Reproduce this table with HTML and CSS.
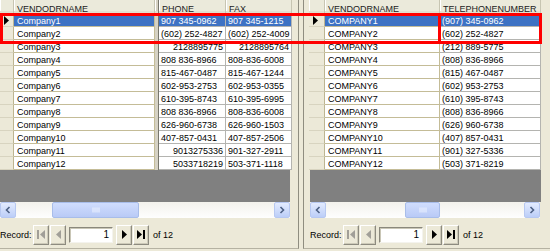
FILE: index.html
```html
<!DOCTYPE html>
<html>
<head>
<meta charset="utf-8">
<link rel="stylesheet" href="styles.css">
</head>
<body>
<div class="screen">
  <section class="panel panel-left">
    <div class="grid grid-left">
      <div class="row hdr"><div class="h"></div><div class="h">VENDODRNAME</div><div class="h split"></div><div class="h">PHONE</div><div class="h">FAX</div></div>
      <div class="row sel"><div class="rh"><svg width="6" height="9" viewBox="0 0 6 9"><path d="M0 0L5 4.5L0 9Z" fill="#000"/></svg></div><div class="c">Company1</div><div class="split"></div><div class="c p">907 345-0962</div><div class="c p">907 345-1215</div></div>
      <div class="row"><div class="rh"></div><div class="c">Company2</div><div class="split"></div><div class="c p">(602) 252-4827</div><div class="c p">(602) 252-4009</div></div>
      <div class="row"><div class="rh"></div><div class="c">Company3</div><div class="split"></div><div class="c p num">2128895775</div><div class="c p num">2128895764</div></div>
      <div class="row"><div class="rh"></div><div class="c">Company4</div><div class="split"></div><div class="c p">808 836-8966</div><div class="c p">808-836-6008</div></div>
      <div class="row"><div class="rh"></div><div class="c">Company5</div><div class="split"></div><div class="c p">815-467-0487</div><div class="c p">815-467-1244</div></div>
      <div class="row"><div class="rh"></div><div class="c">Company6</div><div class="split"></div><div class="c p">602-953-2753</div><div class="c p">602-953-0355</div></div>
      <div class="row"><div class="rh"></div><div class="c">Company7</div><div class="split"></div><div class="c p">610-395-8743</div><div class="c p">610-395-6995</div></div>
      <div class="row"><div class="rh"></div><div class="c">Company8</div><div class="split"></div><div class="c p">808 836-8966</div><div class="c p">808-836-6008</div></div>
      <div class="row"><div class="rh"></div><div class="c">Company9</div><div class="split"></div><div class="c p">626-960-6738</div><div class="c p">626-960-1503</div></div>
      <div class="row"><div class="rh"></div><div class="c">Company10</div><div class="split"></div><div class="c p">407-857-0431</div><div class="c p">407-857-2506</div></div>
      <div class="row"><div class="rh"></div><div class="c">Company11</div><div class="split"></div><div class="c p num">9013275336</div><div class="c p">901-327-2911</div></div>
      <div class="row"><div class="rh"></div><div class="c">Company12</div><div class="split"></div><div class="c p num">5033718219</div><div class="c p">503-371-1118</div></div>
      <div class="empty"></div>
    </div>
    <div class="hscroll hs-left">
      <div class="sb-btn"><svg width="6" height="8" viewBox="0 0 6 8"><path d="M4.5 1L1.5 4L4.5 7" fill="none" stroke="#4d6185" stroke-width="1.6"/></svg></div>
      <div class="thumb"><svg width="8" height="6" viewBox="0 0 8 6"><path d="M1 0.5V5.5M3 0.5V5.5M5 0.5V5.5M7 0.5V5.5" stroke="#eef3ff" stroke-width="1"/></svg></div>
      <div class="sb-btn end"><svg width="6" height="8" viewBox="0 0 6 8"><path d="M1.5 1L4.5 4L1.5 7" fill="none" stroke="#4d6185" stroke-width="1.6"/></svg></div>
    </div>
    <div class="nav">
      <span class="lbl">Record:</span>
      <div class="nbtn"><svg width="8" height="9" viewBox="0 0 8 9"><rect x="0" y="0" width="2" height="9" fill="#a19f98"/><path d="M8 0L3 4.5L8 9Z" fill="#a19f98"/></svg></div>
      <div class="nbtn"><svg width="5" height="9" viewBox="0 0 5 9"><path d="M5 0L0 4.5L5 9Z" fill="#a19f98"/></svg></div>
      <div class="tb">1</div>
      <div class="nbtn nx"><svg width="5" height="9" viewBox="0 0 5 9"><path d="M0 0L5 4.5L0 9Z" fill="#000"/></svg></div>
      <div class="nbtn"><svg width="8" height="9" viewBox="0 0 8 9"><path d="M0 0L5 4.5L0 9Z" fill="#000"/><rect x="6" y="0" width="2" height="9" fill="#000"/></svg></div>
      <span class="of">of 12</span>
    </div>
  </section>

  <section class="panel panel-right">
    <div class="grid grid-right">
      <div class="row hdr"><div class="h"></div><div class="h">VENDODRNAME</div><div class="h">TELEPHONENUMBER</div></div>
      <div class="row sel"><div class="rh"><svg width="6" height="9" viewBox="0 0 6 9"><path d="M0 0L5 4.5L0 9Z" fill="#000"/></svg></div><div class="c">COMPANY1</div><div class="c p">(907) 345-0962</div></div>
      <div class="row"><div class="rh"></div><div class="c">COMPANY2</div><div class="c p">(602) 252-4827</div></div>
      <div class="row"><div class="rh"></div><div class="c">COMPANY3</div><div class="c p">(212) 889-5775</div></div>
      <div class="row"><div class="rh"></div><div class="c">COMPANY4</div><div class="c p">(808) 836-8966</div></div>
      <div class="row"><div class="rh"></div><div class="c">COMPANY5</div><div class="c p">(815) 467-0487</div></div>
      <div class="row"><div class="rh"></div><div class="c">COMPANY6</div><div class="c p">(602) 953-2753</div></div>
      <div class="row"><div class="rh"></div><div class="c">COMPANY7</div><div class="c p">(610) 395-8743</div></div>
      <div class="row"><div class="rh"></div><div class="c">COMPANY8</div><div class="c p">(808) 836-8966</div></div>
      <div class="row"><div class="rh"></div><div class="c">COMPANY9</div><div class="c p">(626) 960-6738</div></div>
      <div class="row"><div class="rh"></div><div class="c">COMPANY10</div><div class="c p">(407) 857-0431</div></div>
      <div class="row"><div class="rh"></div><div class="c">COMPANY11</div><div class="c p">(901) 327-5336</div></div>
      <div class="row"><div class="rh"></div><div class="c">COMPANY12</div><div class="c p">(503) 371-8219</div></div>
      <div class="empty"></div>
    </div>
    <div class="hscroll hs-right">
      <div class="sb-btn"><svg width="6" height="8" viewBox="0 0 6 8"><path d="M4.5 1L1.5 4L4.5 7" fill="none" stroke="#4d6185" stroke-width="1.6"/></svg></div>
      <div class="thumb"><svg width="8" height="6" viewBox="0 0 8 6"><path d="M1 0.5V5.5M3 0.5V5.5M5 0.5V5.5M7 0.5V5.5" stroke="#eef3ff" stroke-width="1"/></svg></div>
      <div class="sb-btn end"><svg width="6" height="8" viewBox="0 0 6 8"><path d="M1.5 1L4.5 4L1.5 7" fill="none" stroke="#4d6185" stroke-width="1.6"/></svg></div>
    </div>
    <div class="nav">
      <span class="lbl">Record:</span>
      <div class="nbtn"><svg width="8" height="9" viewBox="0 0 8 9"><rect x="0" y="0" width="2" height="9" fill="#a19f98"/><path d="M8 0L3 4.5L8 9Z" fill="#a19f98"/></svg></div>
      <div class="nbtn"><svg width="5" height="9" viewBox="0 0 5 9"><path d="M5 0L0 4.5L5 9Z" fill="#a19f98"/></svg></div>
      <div class="tb">1</div>
      <div class="nbtn nx"><svg width="5" height="9" viewBox="0 0 5 9"><path d="M0 0L5 4.5L0 9Z" fill="#000"/></svg></div>
      <div class="nbtn"><svg width="8" height="9" viewBox="0 0 8 9"><path d="M0 0L5 4.5L0 9Z" fill="#000"/><rect x="6" y="0" width="2" height="9" fill="#000"/></svg></div>
      <span class="of">of 12</span>
    </div>
  </section>

  <div class="mark"></div>
  <div class="mark-inner"></div>
</div>
</body>
</html>
```

FILE: styles.css
```css
* { box-sizing: border-box; }
html, body { margin: 0; padding: 0; }
body {
  width: 550px;
  height: 251px;
  overflow: hidden;
  background: #ece9d8;
  font-family: "Liberation Sans", Arial, sans-serif;
  font-size: 9px;
  color: #000;
}
.screen {
  position: relative;
  display: flex;
  height: 251px;
}
.panel {
  height: 249px;
  border-bottom: 1px solid #b5b2a2;
  display: flex;
  flex-direction: column;
}
.panel-left {
  width: 299px;
  border-right: 1px solid #8f8d80;
}
.panel-right {
  margin-left: 4px;
  width: 247px;
  border-left: 1px solid #8f8d80;
  padding-left: 5px;
}
.grid-left { width: 292px; }
.grid-right { width: 232px; }
.row { display: grid; height: 13px; }
.grid-left .row { grid-template-columns: 14px 141px 4px 67px 66px; }
.grid-right .row { grid-template-columns: 16px 115px 101px; }
.row.hdr { height: 14px; }

.h {
  background: #ebeadb;
  border-bottom: 1px solid #c5c2b2;
  border-right: 1px solid #c7c5b2;
  box-shadow: inset 0 -2px 0 #e2dfcf, inset 1px 0 0 #fff;
  padding: 5px 0 0 3px;
  line-height: 9px;
  overflow: hidden;
  white-space: nowrap;
  color: #222;
}
.rh {
  background: #ece9d8;
  border-bottom: 1px solid #d8d4c0;
  border-right: 1px solid #bdb591;
  padding: 2px 0 0 4px;
}
.rh svg { display: block; }
.c {
  background: #fff;
  border-bottom: 1px solid #c4bc97;
  border-right: 1px solid #c4bc97;
  padding: 1px 0 0 3px;
  line-height: 12px;
  white-space: nowrap;
  overflow: hidden;
}
.c.p {
  border-bottom-color: #b4b4b0;
  border-right-color: #b4b4b0;
  padding-left: 2px;
}
.c.num { text-align: right; padding-right: 2px; padding-left: 0; }
.split {
  background: #d6d2c4;
  border-right: 1px solid #77766c;
}
.sel .c { background: #3d72c4; color: #fff; }

.empty {
  height: 32px;
  background: #808080;
  width: 290px;
}
.grid-right .empty { width: 231px; margin-left: 1px; }

.hscroll {
  display: flex;
  height: 16px;
  background: linear-gradient(#f3f2ec, #fefefe);
}
.hs-left { width: 290px; }
.hs-right { width: 230px; margin-left: 1px; }
.sb-btn {
  width: 16px;
  height: 16px;
  border: 1px solid #b7c8f1;
  border-radius: 2px;
  background: linear-gradient(#e3ebfe, #bccef8);
  display: flex;
  align-items: center;
  justify-content: center;
}
.sb-btn.end { margin-left: auto; }
.thumb {
  height: 16px;
  border: 1px solid #a8bde9;
  border-radius: 2px;
  background: linear-gradient(#d0ddfd, #b9caf6);
  display: flex;
  align-items: center;
  justify-content: center;
}
.hs-left .thumb { margin-left: 36px; width: 87px; }
.hs-right .thumb { margin-left: 79px; width: 35px; }

.nav {
  display: flex;
  align-items: center;
  height: 21px;
  margin-top: 6px;
}
.hs-right + .nav { margin-left: 1px; }
.lbl { width: 31px; margin-right: 2px; white-space: nowrap; }
.nbtn {
  width: 16px;
  height: 20px;
  margin-right: 1px;
  border: 1px solid;
  border-color: #fff #8d8b80 #8d8b80 #fff;
  box-shadow: inset -1px -1px 0 #cdcab9;
  background: #ece9d8;
  display: flex;
  align-items: center;
  justify-content: center;
}
.nbtn svg { display: block; }
.tb {
  width: 44px;
  height: 16px;
  margin: 0 2px 0 2px;
  background: #fff;
  border: 1px solid;
  border-color: #8a887c #f4f3ee #f4f3ee #8a887c;
  box-shadow: inset 1px 1px 0 #c9c6b6;
  text-align: right;
  padding-right: 3px;
  line-height: 14px;
  font-size: 10px;
}
.nbtn.nx { margin-left: 1px; }
.of { margin-left: 3px; white-space: nowrap; }

.mark {
  position: absolute;
  left: 0;
  top: 13px;
  width: 542px;
  height: 31px;
  border: 3px solid #f00;
}
.mark-inner {
  position: absolute;
  left: 438px;
  top: 13px;
  width: 3px;
  height: 31px;
  background: #f00;
}
```
